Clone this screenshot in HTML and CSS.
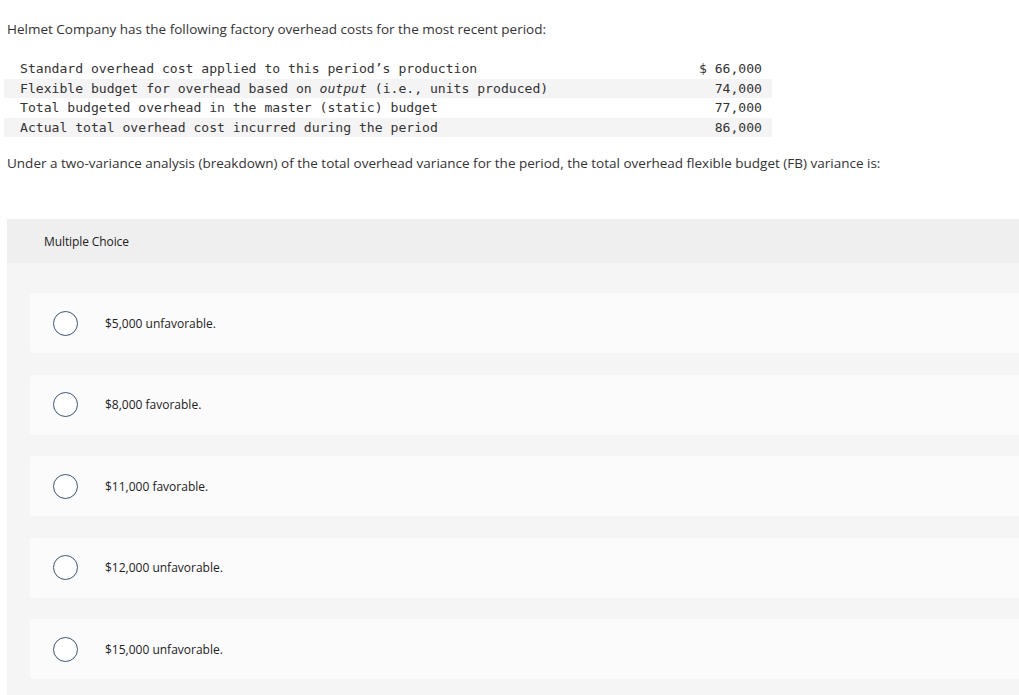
FILE: index.html
```html
<!DOCTYPE html>
<html>
<head>
<meta charset="utf-8">
<link rel="stylesheet" href="styles.css">
</head>
<body>
<div class="page">
  <p class="intro">Helmet Company has the following factory overhead costs for the most recent period:</p>
  <table class="data">
    <tr><td class="lbl">Standard overhead cost applied to this period’s production</td><td class="num">$ 66,000</td></tr>
    <tr class="alt"><td class="lbl">Flexible budget for overhead based on <i>output</i> (i.e., units produced)</td><td class="num">74,000</td></tr>
    <tr><td class="lbl">Total budgeted overhead in the master (static) budget</td><td class="num">77,000</td></tr>
    <tr class="alt"><td class="lbl">Actual total overhead cost incurred during the period</td><td class="num">86,000</td></tr>
  </table>
  <p class="question">Under a two-variance analysis (breakdown) of the total overhead variance for the period, the total overhead flexible budget (FB) variance is:</p>
  <div class="panel">
    <div class="panel-head">Multiple Choice</div>
    <div class="options">
      <div class="option"><span class="radio"></span><span class="opt-text">$5,000 unfavorable.</span></div>
      <div class="option"><span class="radio"></span><span class="opt-text">$8,000 favorable.</span></div>
      <div class="option"><span class="radio"></span><span class="opt-text">$11,000 favorable.</span></div>
      <div class="option"><span class="radio"></span><span class="opt-text">$12,000 unfavorable.</span></div>
      <div class="option"><span class="radio"></span><span class="opt-text">$15,000 unfavorable.</span></div>
    </div>
  </div>
</div>
</body>
</html>
```
FILE: styles.css
```css
html, body {
  margin: 0;
  padding: 0;
  background: #ffffff;
}
body {
  font-family: "Open Sans", "Liberation Sans", sans-serif;
  color: #333333;
  overflow: hidden;
}
.page {
  padding-top: 20px;
}
.intro {
  margin: 0 0 0 7px;
  font-size: 13.5px;
  line-height: 18px;
}
.data {
  margin: 21px 0 0 4px;
  width: 768px;
  border-collapse: collapse;
  font-family: "DejaVu Sans Mono", "Liberation Mono", monospace;
  font-size: 13.1px;
  color: #333;
}
.data td {
  height: 19.5px;
  padding: 0;
  line-height: 19px;
}
.data .lbl {
  padding-left: 16px;
}
.data .num {
  text-align: right;
  padding-right: 10px;
}
.data tr.alt td {
  background: #f4f4f4;
}
.question {
  margin: 17px 0 0 7px;
  font-size: 13.5px;
  line-height: 18px;
}
.panel {
  margin: 47px 0 0 7px;
  background: #f5f5f5;
  padding-bottom: 20px;
}
.panel-head {
  height: 44px;
  background: #efefef;
  display: flex;
  align-items: center;
  padding-left: 37px;
  font-size: 12px;
  color: #222;
  letter-spacing: -0.1px;
}
.options {
  padding: 30px 0 0 23px;
  display: flex;
  flex-direction: column;
  gap: 21.5px;
}
.option {
  height: 60px;
  background: #fbfbfb;
  border-radius: 3px 0 0 3px;
  display: flex;
  align-items: center;
  padding-left: 23px;
}
.radio {
  width: 23px;
  height: 23px;
  border: 1.5px solid #3b5575;
  border-radius: 50%;
  background: #ffffff;
  flex: none;
}
.opt-text {
  margin-left: 27px;
  font-size: 12px;
  color: #222;
}
```
